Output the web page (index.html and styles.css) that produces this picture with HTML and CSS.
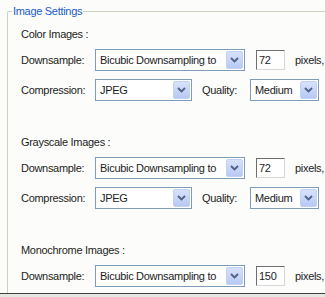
FILE: index.html
```html
<!DOCTYPE html>
<html lang="en">
<head>
  <meta charset="UTF-8">
  <meta name="viewport" content="width=device-width, initial-scale=1.0">
  <title>Image Settings</title>
  <link rel="stylesheet" href="styles.css">
</head>
<body>
  <div class="window">
    <fieldset class="settings">
      <legend>Image Settings</legend>
      <div class="groups">

        <div class="group">
          <div class="group-title">Color Images :</div>
          <div class="row">
            <span class="label">Downsample:</span>
            <div class="select wide">
              <span class="value">Bicubic Downsampling to</span>
              <span class="arrow"><svg width="9" height="6" viewBox="0 0 9 6"><path d="M1 1 L4.5 4.5 L8 1" fill="none" stroke="#4d6185" stroke-width="1.8"/></svg></span>
            </div>
            <div class="number">72</div>
            <span class="unit">pixels,</span>
          </div>
          <div class="row">
            <span class="label">Compression:</span>
            <div class="select medium">
              <span class="value">JPEG</span>
              <span class="arrow"><svg width="9" height="6" viewBox="0 0 9 6"><path d="M1 1 L4.5 4.5 L8 1" fill="none" stroke="#4d6185" stroke-width="1.8"/></svg></span>
            </div>
            <span class="quality-label">Quality:</span>
            <div class="select small">
              <span class="value">Medium</span>
              <span class="arrow"><svg width="9" height="6" viewBox="0 0 9 6"><path d="M1 1 L4.5 4.5 L8 1" fill="none" stroke="#4d6185" stroke-width="1.8"/></svg></span>
            </div>
          </div>
        </div>

        <div class="group">
          <div class="group-title">Grayscale Images :</div>
          <div class="row">
            <span class="label">Downsample:</span>
            <div class="select wide">
              <span class="value">Bicubic Downsampling to</span>
              <span class="arrow"><svg width="9" height="6" viewBox="0 0 9 6"><path d="M1 1 L4.5 4.5 L8 1" fill="none" stroke="#4d6185" stroke-width="1.8"/></svg></span>
            </div>
            <div class="number">72</div>
            <span class="unit">pixels,</span>
          </div>
          <div class="row">
            <span class="label">Compression:</span>
            <div class="select medium">
              <span class="value">JPEG</span>
              <span class="arrow"><svg width="9" height="6" viewBox="0 0 9 6"><path d="M1 1 L4.5 4.5 L8 1" fill="none" stroke="#4d6185" stroke-width="1.8"/></svg></span>
            </div>
            <span class="quality-label">Quality:</span>
            <div class="select small">
              <span class="value">Medium</span>
              <span class="arrow"><svg width="9" height="6" viewBox="0 0 9 6"><path d="M1 1 L4.5 4.5 L8 1" fill="none" stroke="#4d6185" stroke-width="1.8"/></svg></span>
            </div>
          </div>
        </div>

        <div class="group">
          <div class="group-title">Monochrome Images :</div>
          <div class="row">
            <span class="label">Downsample:</span>
            <div class="select wide">
              <span class="value">Bicubic Downsampling to</span>
              <span class="arrow"><svg width="9" height="6" viewBox="0 0 9 6"><path d="M1 1 L4.5 4.5 L8 1" fill="none" stroke="#4d6185" stroke-width="1.8"/></svg></span>
            </div>
            <div class="number">150</div>
            <span class="unit">pixels,</span>
          </div>
        </div>

      </div>
    </fieldset>
  </div>
</body>
</html>
```

FILE: styles.css
```css
/* styles.css */
body {
    margin: 0;
    background-color: #e6e6e2;
    font-family: "Liberation Sans", Arial, sans-serif;
    font-size: 11px;
    letter-spacing: -0.3px;
    color: #1c1c1c;
    overflow: hidden;
}

.window {
    height: 293px;
    background-color: #fcfcfa;
    border-bottom: 1px solid #404040;
    overflow: hidden;
}

.settings {
    margin: 4px 0 0 7px;
    padding: 0;
    width: 420px;
    min-width: 0;
    height: 300px;
    border: 1px solid #d0d0bf;
    border-right: none;
    border-bottom: none;
    border-radius: 2px 0 0 0;
}

.settings legend {
    margin-left: 4px;
    padding: 0 1px;
    line-height: 14px;
    color: #215dc6;
}

.groups {
    padding: 9px 0 0 13px;
}

.group + .group {
    margin-top: 34px;
}

.group-title {
    line-height: 14px;
    margin-bottom: 8px;
}

.row {
    display: flex;
    align-items: center;
    height: 22px;
    white-space: nowrap;
}

.row + .row {
    margin-top: 8px;
}

.label {
    width: 74px;
}

.select {
    display: flex;
    align-items: center;
    box-sizing: border-box;
    height: 22px;
    padding: 0 1px 0 4px;
    border: 1px solid #7f9db9;
    background-color: #fff;
}

.select .value {
    flex: 1;
}

.arrow {
    display: flex;
    align-items: center;
    justify-content: center;
    box-sizing: border-box;
    width: 17px;
    height: 18px;
    border: 1px solid #c3d1f2;
    border-radius: 2px;
    background: linear-gradient(#d7e1fa, #b7c9f4);
}

.wide {
    width: 150px;
}

.medium {
    width: 97px;
}

.small {
    width: 69px;
}

.quality-label {
    margin-left: 10px;
    width: 48px;
}

.number {
    box-sizing: border-box;
    margin-left: 11px;
    width: 29px;
    height: 20px;
    line-height: 18px;
    padding-left: 2px;
    background-color: #fff;
    border: 1px solid #d8d8d8;
    border-top-color: #6e6e6e;
    border-left-color: #6e6e6e;
}

.unit {
    margin-left: 10px;
}
```
